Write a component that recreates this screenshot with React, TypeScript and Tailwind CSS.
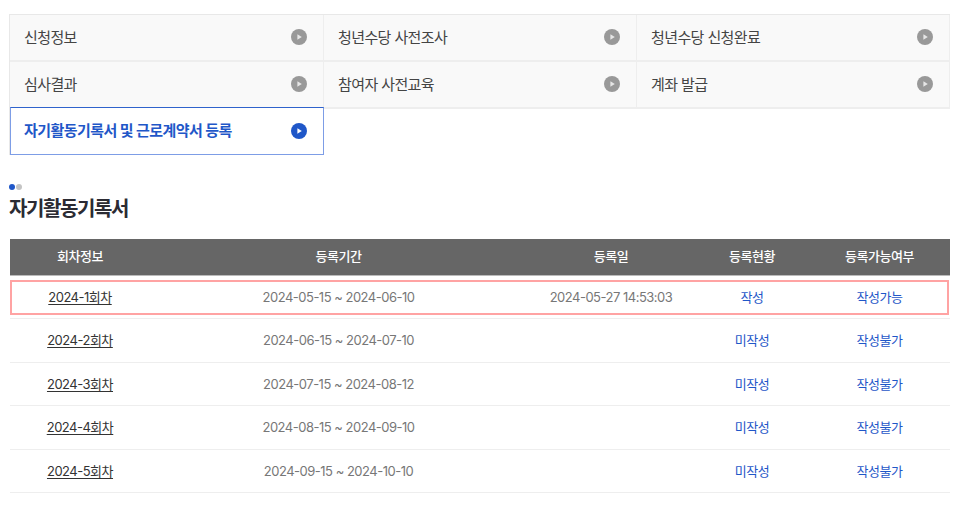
const font = "[font-family:Inter,'Noto_Sans_CJK_KR',sans-serif]";

const tabs = [
  { label: "신청정보" },
  { label: "청년수당 사전조사" },
  { label: "청년수당 신청완료" },
  { label: "심사결과" },
  { label: "참여자 사전교육" },
  { label: "계좌 발급" },
];

const rounds = [
  { name: "2024-1회차", period: "2024-05-15 ~ 2024-06-10", date: "2024-05-27 14:53:03", status: "작성", able: "작성가능" },
  { name: "2024-2회차", period: "2024-06-15 ~ 2024-07-10", date: "", status: "미작성", able: "작성불가" },
  { name: "2024-3회차", period: "2024-07-15 ~ 2024-08-12", date: "", status: "미작성", able: "작성불가" },
  { name: "2024-4회차", period: "2024-08-15 ~ 2024-09-10", date: "", status: "미작성", able: "작성불가" },
  { name: "2024-5회차", period: "2024-09-15 ~ 2024-10-10", date: "", status: "미작성", able: "작성불가" },
];

function PlayIcon({ active }: { active?: boolean }) {
  return (
    <svg width="16" height="16" viewBox="0 0 16 16" className="mb-px shrink-0">
      <circle cx="8" cy="8" r="8" fill={active ? "#1f57c8" : "#999999"} />
      <path d="M6.4 5.2 L10.8 8 L6.4 10.8 Z" fill={active ? "#ffffff" : "#e6e6e6"} />
    </svg>
  );
}

const cols = "grid grid-cols-[140px_377px_168px_114px_141px]";

export default function App() {
  return (
    <div className={`${font} h-[506px] w-[960px] overflow-hidden bg-white pl-[9px] pt-[14px]`}>
      {/* Tabs */}
      <div className="grid w-[941px] grid-cols-[314px_313px_313px] border-t border-l border-[#e8e8e8]">
        {tabs.map((t) => (
          <div
            key={t.label}
            className="flex h-[47px] items-center justify-between border-r border-b-2 border-[#eeeeee] bg-[#f9f9f9] pl-[14px] pr-[16px] text-[15px] tracking-[-0.6px] text-[#444444]"
          >
            <span className="pt-px">{t.label}</span>
            <PlayIcon />
          </div>
        ))}
        <div className="-mt-[2px] flex h-[48px] items-center justify-between border border-[#7d9de6] border-t-[#2f63cc] bg-white pl-[13px] pr-[16px] text-[15px] font-bold tracking-[-0.55px] text-[#1f57c8]">
          <span>자기활동기록서 및 근로계약서 등록</span>
          <PlayIcon active />
        </div>
      </div>

      {/* Section title */}
      <div className="mt-[29px] flex gap-px">
        <span className="h-[6px] w-[6px] rounded-full bg-[#1f57c8]" />
        <span className="h-[6px] w-[6px] rounded-full bg-[#c4c4c4]" />
      </div>
      <h2 className="mt-[5px] h-[29px] text-[20px] font-bold leading-[29px] tracking-[-1.4px] text-[#2b2b33]">자기활동기록서</h2>

      {/* Table */}
      <div className="mt-[15px] ml-px w-[940px] text-center text-[13px]">
        <div className={`${cols} h-[37px] items-center border-b border-[#bbbbbb] bg-[#666666] font-medium tracking-[-0.5px] text-white`}>
          <div>회차정보</div>
          <div>등록기간</div>
          <div>등록일</div>
          <div>등록현황</div>
          <div>등록가능여부</div>
        </div>
        {rounds.map((r, i) => (
          <div key={r.name} className="h-[43.4px] border-b border-[#eeeeee]">
            <div
              className={`${cols} items-center tracking-[-0.5px] ${
                i === 0
                  ? "relative top-[4px] h-[35px] w-[939px] outline-2 -outline-offset-2 outline-[#ffa3a3]"
                  : "h-full pt-px"
              }`}
            >
              <div className="text-[#333333] underline underline-offset-2">{r.name}</div>
              <div className="text-[#777777]">{r.period}</div>
              <div className="text-[#777777]">{r.date}</div>
              <div className="text-[#1f57c8]">{r.status}</div>
              <div className="text-[#1f57c8]">{r.able}</div>
            </div>
          </div>
        ))}
      </div>
    </div>
  );
}
